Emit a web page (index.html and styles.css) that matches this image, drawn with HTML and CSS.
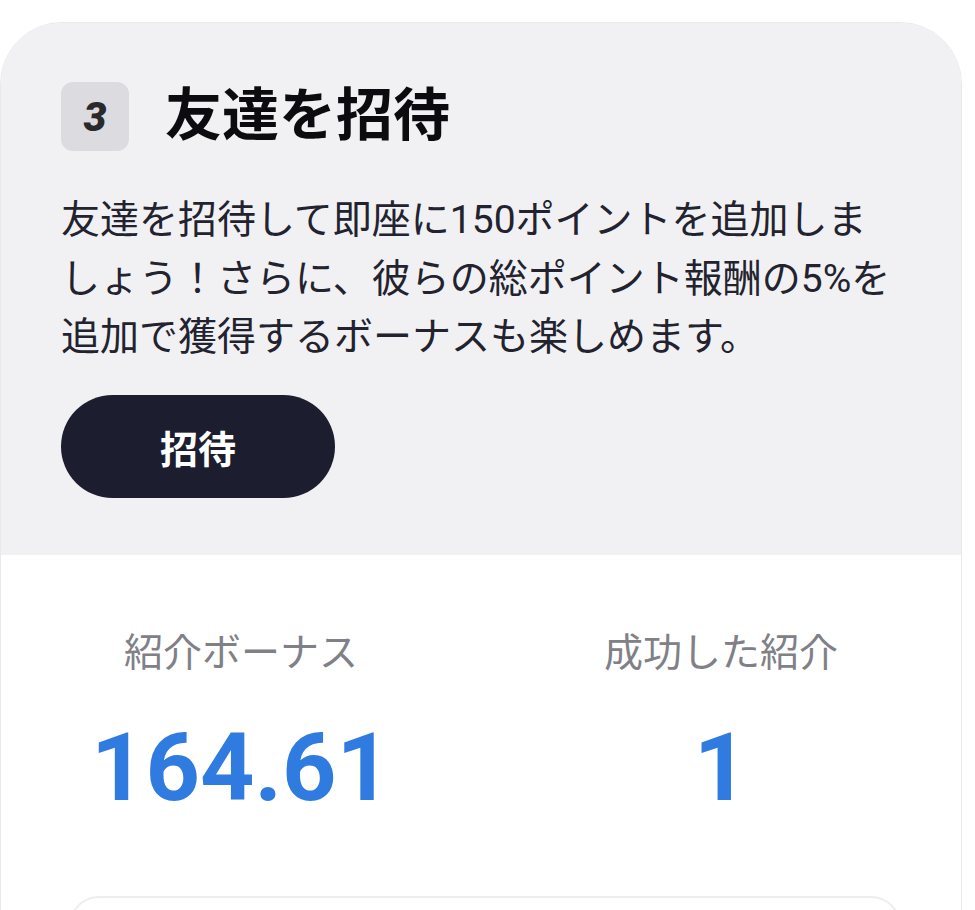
FILE: index.html
```html
<!DOCTYPE html>
<html lang="ja">
<head>
    <meta charset="UTF-8">
    <meta name="viewport" content="width=device-width, initial-scale=1.0">
    <title>友達を招待</title>
    <link rel="stylesheet" href="styles.css">
</head>
<body>
    <div class="card">
        <div class="invite">
            <div class="invite-head">
                <span class="step">3</span>
                <h1>友達を招待</h1>
            </div>
            <p class="desc">友達を招待して即座に150ポイントを追加しま<br>しょう！さらに、彼らの総ポイント報酬の5%を<br>追加で獲得するボーナスも楽しめます。</p>
            <button class="invite-btn">招待</button>
        </div>

        <div class="stats">
            <div class="stat">
                <div class="stat-label">紹介ボーナス</div>
                <div class="stat-value">164.61</div>
            </div>
            <div class="stat">
                <div class="stat-label">成功した紹介</div>
                <div class="stat-value">1</div>
            </div>
        </div>

        <div class="history"></div>
    </div>
</body>
</html>
```

FILE: styles.css
```css
body {
    margin: 0;
    padding-top: 22px;
    background: #fff;
    font-family: Roboto, "Noto Sans CJK JP", sans-serif;
    color: #1c1e2b;
}
.card {
    width: 960px;
    border: 1px solid #e9e9ec;
    border-radius: 62px 62px 0 0;
    overflow: hidden;
    background: #fff;
}
.invite {
    background-color: #f1f1f4;
    padding: 59px 60px 57px;
}
.invite-head {
    display: flex;
    align-items: center;
    gap: 36px;
}
.step {
    width: 68px;
    height: 69px;
    border-radius: 12px;
    background: #dcdce0;
    display: flex;
    align-items: center;
    justify-content: center;
    font-family: Roboto, "Liberation Sans", sans-serif;
    font-size: 41px;
    font-weight: 900;
    font-style: italic;
    color: #2a2a2c;
}
h1 {
    margin: 0;
    font-size: 57px;
    font-weight: bold;
    color: #0c0c10;
    line-height: 1.2;
}
.desc {
    margin: 40px 0 28px;
    font-size: 39px;
    line-height: 58.5px;
    color: #22232e;
    white-space: nowrap;
}
.invite-btn {
    width: 274px;
    height: 103px;
    border: none;
    border-radius: 52px;
    background: #1c1e30;
    color: #fff;
    font-family: inherit;
    font-size: 38px;
    font-weight: bold;
}
.stats {
    display: grid;
    grid-template-columns: 1fr 1fr;
    padding: 71px 0 0;
    text-align: center;
}
.stat-label {
    font-size: 39px;
    line-height: 54px;
    color: #808087;
}
.stat-value {
    margin-top: 31px;
    font-size: 95px;
    font-weight: bold;
    line-height: 113px;
    color: #2f7be0;
}
.history {
    margin: 72px 60px 0 68px;
    height: 80px;
    border: 2px solid #eeeeef;
    border-radius: 30px;
}
```
